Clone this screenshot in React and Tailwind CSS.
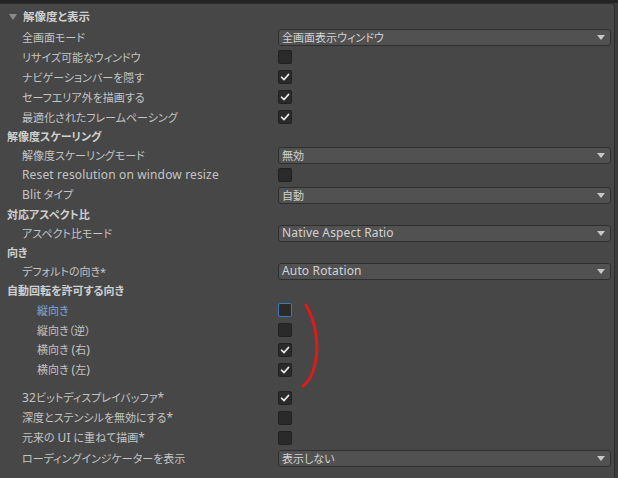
import React from "react";

// Latin runs are a touch larger than the Japanese ones in the reference
const L = ({ children }) => <span className="text-[12px] tracking-[0.15px]">{children}</span>;

const Check = () => (
  <svg width="10" height="10" viewBox="0 0 10 10" className="block">
    <path d="M1.5 5.2 L4 7.6 L8.6 2.4" fill="none" stroke="#e6e6e6" strokeWidth="1.6" strokeLinecap="round" strokeLinejoin="round" />
  </svg>
);

const Checkbox = ({ checked, focus }) => (
  <div
    className={
      "w-[14px] h-[14px] rounded-[2px] bg-[#2a2a2a] border flex items-center justify-center " +
      (focus ? "border-[#3a79bb]" : "border-[#212121]")
    }
  >
    {checked && <Check />}
  </div>
);

const Dropdown = ({ value }) => (
  <div className="w-[333px] h-[17px] rounded-[3px] bg-[#515151] border border-[#2f2f2f] flex items-center justify-between pl-[3px] pr-[5px]">
    <span className="text-[11px] text-[#d2d2d2] leading-none">{value}</span>
    <span className="w-0 h-0 border-l-[4px] border-r-[4px] border-t-[5px] border-l-transparent border-r-transparent border-t-[#c8c8c8]" />
  </div>
);

const Row = ({ label, indent = "pl-[22px]", blue, children }) => (
  <div className="h-5 flex items-center">
    <div className={"w-[278px] shrink-0 text-[11px] leading-none " + indent + (blue ? " text-[#7ca7e0]" : " text-[#c4c4c4]")}>
      {label}
    </div>
    {children}
  </div>
);

const Header = ({ label, h = "h-[18px]" }) => (
  <div className={h + " flex items-center pl-[7px] text-[11px] font-bold leading-none text-[#d0d0d0]"}>{label}</div>
);

export default function App() {
  return (
    <div className="w-[618px] h-[478px] bg-[#3c3c3c] overflow-hidden font-['Noto_Sans','Noto_Sans_CJK_JP',sans-serif] [font-feature-settings:'palt']">
      <div className="h-[3px] bg-[#242424]" />
      <div className="relative w-[615px] h-[475px] bg-[#474747] border-t border-r border-[#2d2d2d] rounded-tr-[4px]">
        <div className="pt-[3px]">
          <div className="h-5 flex items-center pl-[9px] gap-[6px]">
            <span className="w-0 h-0 border-l-[4px] border-r-[4px] border-t-[6px] border-l-transparent border-r-transparent border-t-[#8a8a8a]" />
            <span className="text-[11.5px] font-bold leading-none text-[#d0d0d0]">解像度と表示</span>
          </div>
          <Row label="全画面モード"><Dropdown value="全画面表示ウィンドウ" /></Row>
          <Row label="リサイズ可能なウィンドウ"><Checkbox /></Row>
          <Row label="ナビゲーションバーを隠す"><Checkbox checked /></Row>
          <Row label="セーフエリア外を描画する"><Checkbox checked /></Row>
          <Row label="最適化されたフレームペーシング"><Checkbox checked /></Row>
          <Header label="解像度スケーリング" />
          <Row label="解像度スケーリングモード"><Dropdown value="無効" /></Row>
          <Row label={<L>Reset resolution on window resize</L>}><Checkbox /></Row>
          <Row label={<><L>Blit</L> タイプ</>}><Dropdown value="自動" /></Row>
          <Header label="対応アスペクト比" />
          <Row label="アスペクト比モード"><Dropdown value={<L>Native Aspect Ratio</L>} /></Row>
          <Header label="向き" />
          <Row label="デフォルトの向き*"><Dropdown value={<L>Auto Rotation</L>} /></Row>
          <Header label="自動回転を許可する向き" h="h-[19px]" />
          <Row label="縦向き" indent="pl-[37px]" blue><Checkbox focus /></Row>
          <Row label="縦向き（逆）" indent="pl-[37px]"><Checkbox /></Row>
          <Row label={<>横向き <L>(</L>右<L>)</L></>} indent="pl-[37px]"><Checkbox checked /></Row>
          <Row label={<>横向き <L>(</L>左<L>)</L></>} indent="pl-[37px]"><Checkbox checked /></Row>
          <div className="h-2" />
          <Row label={<><L>32</L>ビットディスプレイバッファ<L>*</L></>}><Checkbox checked /></Row>
          <Row label={<>深度とステンシルを無効にする<L>*</L></>}><Checkbox /></Row>
          <Row label={<>元来の <L>UI</L> に重ねて描画<L>*</L></>}><Checkbox /></Row>
          <Row label="ローディングインジケーターを表示"><Dropdown value="表示しない" /></Row>
        </div>
        <svg className="absolute left-[300px] top-[298px]" width="24" height="88" viewBox="0 0 24 88">
          <path d="M6 3 C 16 20, 20 45, 14 66 C 12 74, 8 80, 3 84" fill="none" stroke="#e01a1a" strokeWidth="3" strokeLinecap="round" />
        </svg>
      </div>
    </div>
  );
}
